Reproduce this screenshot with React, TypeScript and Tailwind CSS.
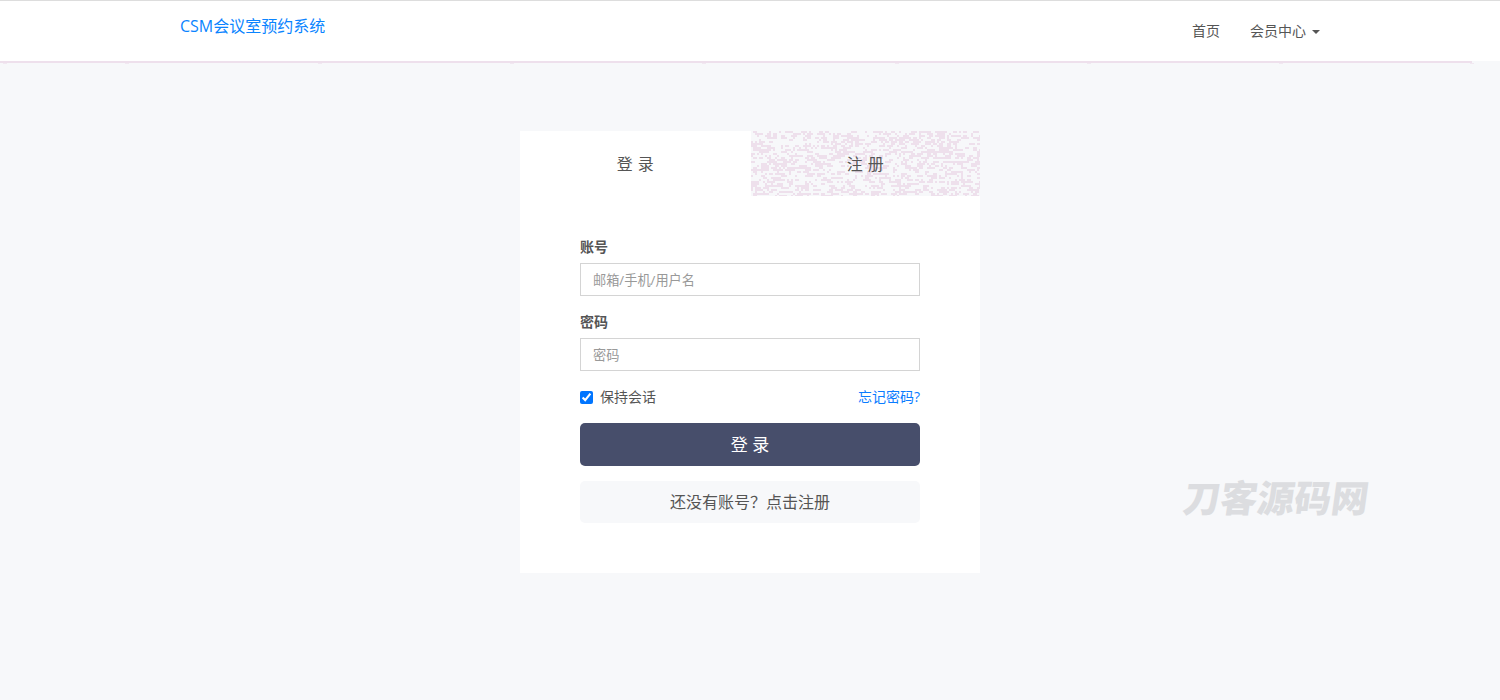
import React from "react";

const fontStack = '"Open Sans", "Noto Sans CJK SC", sans-serif';

// noise for the register tab, seeded so every render is the same
function noiseCells() {
  const cells: { x: number; y: number; w: number }[] = [];
  let seed = 20211;
  const next = () => {
    seed = (seed * 1103515245 + 12345) & 0x7fffffff;
    return seed / 0x7fffffff;
  };
  for (let y = 0; y < 65; y += 2) {
    for (let x = 0; x < 230; x += 2) {
      if (next() < 0.3) {
        const r = next();
        cells.push({ x, y, w: r < 0.5 ? 2 : r < 0.85 ? 4 : 6 });
      }
    }
  }
  return cells;
}

const cells = noiseCells();
const bumps = [3, 125, 318, 510, 702, 895, 1087, 1279, 1470];

function Watermark() {
  return (
    <div
      className="absolute left-[1184px] top-[474px] text-[37px] leading-[44px] font-black text-[#dcdde0] -skew-x-[8deg] select-none"
      style={{ fontFamily: '"Noto Sans CJK SC", sans-serif' }}
    >
      刀客源码网
    </div>
  );
}

export default function App() {
  return (
    <div className="relative min-h-[700px] overflow-hidden bg-[#f7f8fa]" style={{ fontFamily: fontStack }}>
      {/* Header */}
      <header className="h-[61px] border-t border-[#dddddd] bg-white">
        <nav className="mx-auto flex w-[1140px] justify-between">
          <a href="#" className="mt-[14px] text-[16px] leading-[22px] text-[#0a84ff]">
            CSM会议室预约系统
          </a>
          <div className="mt-[19px] flex items-center gap-[30px] text-[14px] leading-[22px] text-[#555555]">
            <a href="#">首页</a>
            <a href="#" className="flex items-center">
              会员中心
              <span className="ml-[6px] mt-[2px] h-0 w-0 border-x-4 border-t-4 border-x-transparent border-t-[#555555]" />
            </a>
          </div>
        </nav>
      </header>
      <svg className="block h-[3px] w-full" viewBox="0 0 1500 3" aria-hidden="true">
        <rect x="0" y="0" width="1472" height="2" fill="#eee0ec" />
        {bumps.map((x) => (
          <rect key={x} x={x} y="2" width="4" height="1" fill="#f1e8f1" />
        ))}
      </svg>

      {/* Login card */}
      <main className="mx-auto mt-[67px] w-[460px] bg-white pb-[50px]">
        <div className="flex h-[65px]">
          <div className="flex w-[231px] items-center justify-center text-[16px] tracking-[0.5px] text-[#555555]">
            登 录
          </div>
          <div className="relative flex w-[229px] items-center justify-center bg-[#f7f8fa] text-[16px] tracking-[0.5px] text-[#555555]">
            <svg className="absolute inset-0 h-full w-full" viewBox="0 0 229 65" aria-hidden="true">
              {cells.map((c, i) => (
                <rect key={i} x={c.x} y={c.y} width={c.w} height="2" fill="#eee0ec" />
              ))}
            </svg>
            <span className="relative">注 册</span>
          </div>
        </div>

        <form className="px-[60px] pt-[41px]">
          <label className="block text-[14px] leading-[20px] font-bold text-[#555555]">账号</label>
          <input
            placeholder="邮箱/手机/用户名"
            className="mt-[6px] block h-[33px] w-full border border-[#d4d4d4] px-3 text-[13.2px] text-[#555555] outline-none placeholder:text-[#999999]"
          />
          <label className="mt-[16px] block text-[14px] leading-[20px] font-bold text-[#555555]">密码</label>
          <input
            placeholder="密码"
            className="mt-[6px] block h-[33px] w-full border border-[#d4d4d4] px-3 text-[13.2px] text-[#555555] outline-none placeholder:text-[#999999]"
          />
          <div className="mt-[16px] flex items-center justify-between text-[14px] leading-[20px]">
            <label className="flex items-center text-[#555555]">
              <input type="checkbox" defaultChecked className="m-0 mr-[7px] h-[13px] w-[13px]" />
              保持会话
            </label>
            <a href="#" className="text-[#0a7cff]">
              忘记密码?
            </a>
          </div>
          <button
            type="button"
            className="mt-[16px] block h-[43px] w-full rounded-[5px] bg-[#474e6b] text-[17px] text-white"
          >
            登 录
          </button>
          <a
            href="#"
            className="mt-[15px] block h-[42px] rounded-[5px] bg-[#f7f8fa] text-center text-[16px] leading-[42px] text-[#555555]"
          >
            还没有账号？点击注册
          </a>
        </form>
      </main>

      <Watermark />
    </div>
  );
}
